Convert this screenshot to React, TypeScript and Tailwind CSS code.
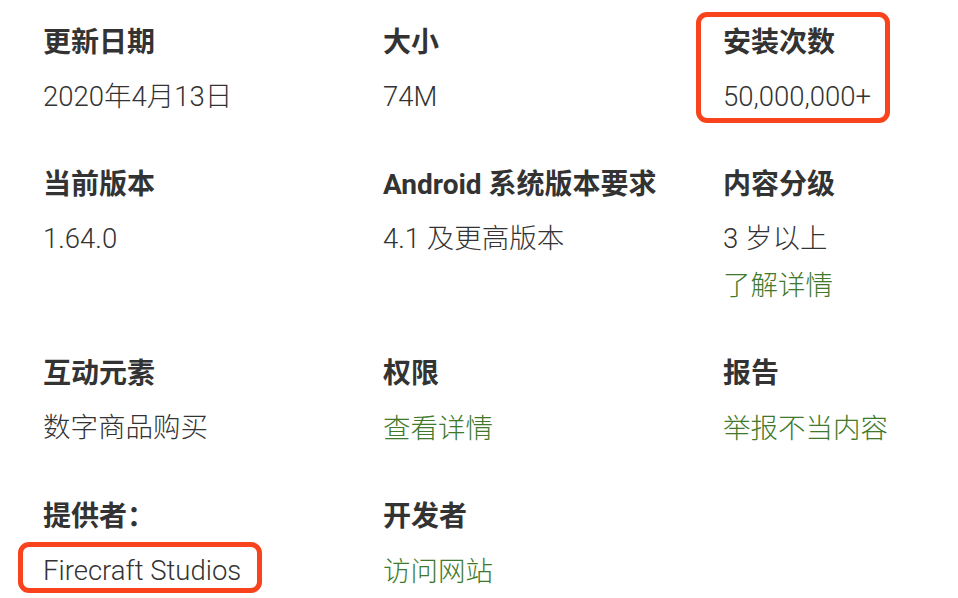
const font = { fontFamily: '"Roboto", "Noto Sans CJK SC", sans-serif' };

type Item = { title: string; value?: string; link?: string };

const items: Item[] = [
  { title: "更新日期", value: "2020年4月13日" },
  { title: "大小", value: "74M" },
  { title: "安装次数", value: "50,000,000+" },
  { title: "当前版本", value: "1.64.0" },
  { title: "Android 系统版本要求", value: "4.1 及更高版本" },
  { title: "内容分级", value: "3 岁以上", link: "了解详情" },
  { title: "互动元素", value: "数字商品购买" },
  { title: "权限", link: "查看详情" },
  { title: "报告", link: "举报不当内容" },
  { title: "提供者：", value: "Firecraft Studios" },
  { title: "开发者", link: "访问网站" },
];

function Cell({ item }: { item: Item }) {
  return (
    <div>
      <div className="text-[28px] leading-[46px] font-bold text-[#333333]">{item.title}</div>
      <div className="mt-[8px]">
        {item.value && (
          <div className="text-[27.5px] leading-[46px] font-light text-[#333333]">{item.value}</div>
        )}
        {item.link && (
          <div className="text-[27.5px] leading-[47px] font-light text-[#3f7a2c]">{item.link}</div>
        )}
      </div>
    </div>
  );
}

export default function App() {
  return (
    <div className="relative w-[958px] h-[598px] bg-white overflow-hidden" style={font}>
      <div className="grid grid-cols-[340px_340px_235px] gap-y-[42px] pl-[43px] pt-[20px]">
        {items.map((it) => (
          <Cell key={it.title} item={it} />
        ))}
      </div>
      <div className="absolute left-[696px] top-[12px] w-[194px] h-[111px] rounded-[11px] border-[5px] border-[#f9431d]" />
      <div className="absolute left-[18px] top-[542px] w-[244px] h-[51px] rounded-[11px] border-[5px] border-[#f9431d]" />
    </div>
  );
}
